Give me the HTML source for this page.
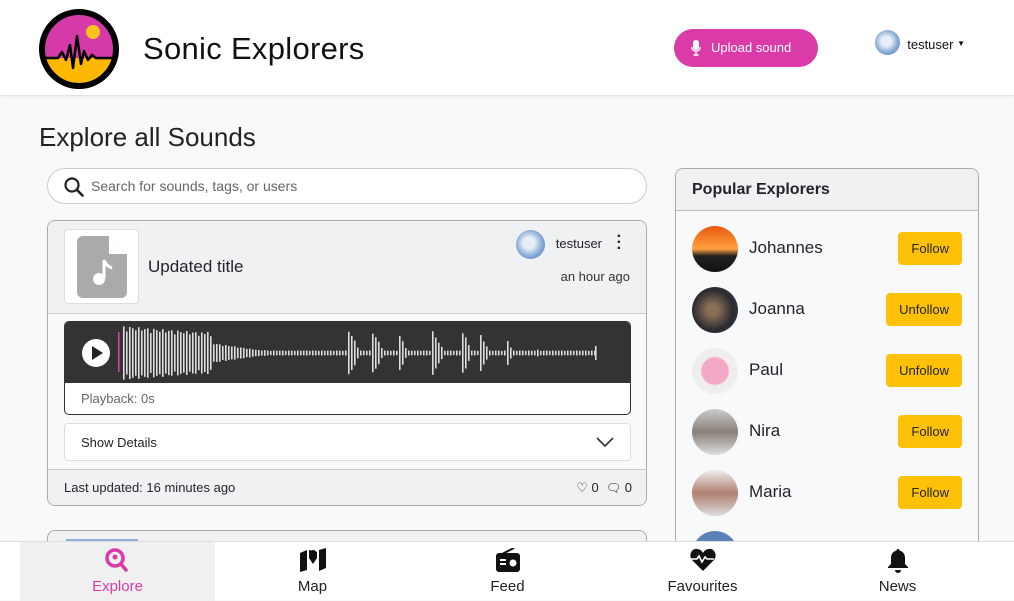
<!DOCTYPE html>
<html><head><meta charset="utf-8"><style>
*{box-sizing:border-box;margin:0;padding:0}
body{width:1014px;height:600px;overflow:hidden;background:#f8f9fa;font-family:"Liberation Sans","DejaVu Sans",sans-serif;color:#212529;position:relative}
.hdr{position:absolute;left:0;top:0;width:1014px;height:96px;background:#fff;border-bottom:1px solid #e3e3e3;box-shadow:0 1px 3px rgba(0,0,0,.06)}
.brand{position:absolute;left:143px;top:31px;font-size:31px;letter-spacing:.3px;color:#111}
.up{position:absolute;left:674px;top:29px;width:144px;height:38px;border-radius:19px;background:#db3ba9;color:#fff;font-size:13px;line-height:38px;padding-left:37px}
.user{position:absolute;left:875px;top:36px;font-size:13px;color:#111}
.av{display:inline-block;border-radius:50%;background:radial-gradient(circle at 45% 45%,#e8eef7 0 25%,#8fb0d8 55%,#3d6fb0 100%);vertical-align:middle}
h1{position:absolute;left:39px;top:122px;font-size:26px;font-weight:normal;color:#222}
.search{position:absolute;left:47px;top:168px;width:600px;height:36px;border:1px solid #ccc;border-radius:18px;background:#fff;font-size:14px;color:#666;line-height:34px;padding-left:43px}
.card{position:absolute;left:47px;top:220px;width:600px;height:286px;border:1px solid #aaa;border-radius:8px;background:#f8f9fa;overflow:hidden}
.ch{height:93px;background:#f0f1f3;border-bottom:1px solid #ccc;position:relative}
.thumb{position:absolute;left:16px;top:8px;width:75px;height:75px;border:1px solid #ddd;border-radius:4px;background:#fff}
.wave{position:absolute;left:16px;top:100px;width:567px;height:94px;border:1px solid #333;border-radius:5px;background:#fff;overflow:hidden}
.wt{height:61px;background:#333;position:relative}
.det{position:absolute;left:16px;top:202px;width:567px;height:38px;border:1px solid #ddd;border-radius:4px;background:#fff;font-size:13px;line-height:37px;padding-left:16px}
.cf{position:absolute;left:0;top:248px;width:600px;height:38px;background:#f0f1f3;border-top:1px solid #ccc;font-size:13px;line-height:36px;padding-left:16px}
.card2{position:absolute;left:47px;top:530px;width:600px;height:30px;border:1px solid #aaa;border-radius:8px;background:#f0f1f3}
.pop{position:absolute;left:675px;top:168px;width:304px;height:400px;border:1px solid #aaa;border-radius:8px;background:#f8f9fa;overflow:hidden}
.ph{height:42px;background:#f0f1f3;border-bottom:1px solid #bbb;font-weight:bold;font-size:16px;line-height:41px;padding-left:16px}
.row{position:absolute;left:16px;height:46px;width:270px}
.row .av2{position:absolute;left:0;top:0;width:46px;height:46px;border-radius:50%}
.row .n{position:absolute;left:57px;top:12px;font-size:17px}
.btn{position:absolute;right:0;top:6px;height:33px;background:#ffc107;border-radius:4px;font-size:13px;line-height:33px;padding:0 13px}
.nav{position:absolute;left:0;top:541px;width:1014px;height:59px;background:#fff;border-top:1px solid #ddd}
.ni{position:absolute;top:0;width:195px;height:59px;text-align:center;font-size:15px;color:#222}
.ni svg{position:absolute;left:85px;top:6px}
.ni span{position:absolute;left:0;right:0;top:36px}
</style></head><body>
<div class="hdr">
<svg style="position:absolute;left:38px;top:8px" width="82" height="82" viewBox="0 0 82 82">
<defs><clipPath id="c"><circle cx="41" cy="41" r="36"/></clipPath></defs>
<g clip-path="url(#c)"><rect width="82" height="50" fill="#d63aa8"/><rect y="50" width="82" height="40" fill="#ffb800"/></g>
<circle cx="41" cy="41" r="37" fill="none" stroke="#000" stroke-width="6"/>
<circle cx="55" cy="24" r="7" fill="#ffc21a"/>
<path d="M5 50 H20 L24 44 L28 52 L32 37 L35 60 L39 28 L43 56 L46 43 L50 52 L54 47 L58 50 H78" fill="none" stroke="#000" stroke-width="2.5" stroke-linejoin="round"/>
</svg>
<div class="brand">Sonic Explorers</div>
<div class="up"><svg style="position:absolute;left:17px;top:11px" width="10" height="16" viewBox="0 0 10 16"><rect x="2" y="0" width="6" height="10" rx="3" fill="#fff"/><path d="M0.8 7a4.2 4.2 0 0 0 8.4 0M5 11.5V15M2.5 15h5" stroke="#fff" stroke-width="1.4" fill="none"/></svg>Upload sound</div>
<div class="user"><span class="av" style="width:25px;height:25px;margin-top:-6px"></span> &nbsp;testuser <span style="font-size:8px;vertical-align:3px">▼</span></div>
</div>
<h1>Explore all Sounds</h1>
<div class="search"><svg style="position:absolute;left:16px;top:8px" width="20" height="20" viewBox="0 0 20 20"><circle cx="8" cy="8" r="6.5" fill="none" stroke="#222" stroke-width="2.2"/><path d="M13 13l5.5 5.5" stroke="#222" stroke-width="2.6" stroke-linecap="round"/></svg>Search for sounds, tags, or users</div>
<div class="card">
<div class="ch">
<div class="thumb"><svg style="position:absolute;left:12px;top:6px" width="50" height="62" viewBox="0 0 50 62"><path d="M6 0H32L50 18V56a6 6 0 0 1-6 6H6a6 6 0 0 1-6-6V6a6 6 0 0 1 6-6z" fill="#aaa"/><path d="M32 0V18H50" fill="#fff"/><path d="M27 24v18" stroke="#fff" stroke-width="3"/><path d="M27 24q2 6 8 8" stroke="#fff" stroke-width="3" fill="none"/><circle cx="22" cy="43" r="6" fill="#fff"/></svg></div>
<div style="position:absolute;left:100px;top:36px;font-size:17px">Updated title</div>
<div style="position:absolute;right:44px;top:9px;font-size:13px"><span class="av" style="width:29px;height:29px"></span>&nbsp;&nbsp; testuser</div>
<div style="position:absolute;right:24px;top:13px;font-size:16px;font-weight:bold;line-height:6px">·<br>·<br>·</div>
<div style="position:absolute;right:16px;top:48px;font-size:13px;color:#333">an hour ago</div>
</div>
<div class="wave"><div class="wt">
<svg width="567" height="61" style="position:absolute;left:0;top:0" id="wv">
<circle cx="31" cy="31" r="14" fill="#fff"/><path d="M27 24v14l11-7z" fill="#222"/>
<rect x="53" y="10" width="1.5" height="40" fill="#e040b0"/>
</svg></div>
<div style="font-size:13px;color:#666;padding:8px 0 0 16px">Playback: 0s</div></div>
<div class="det">Show Details<svg style="position:absolute;right:16px;top:13px" width="18" height="11" viewBox="0 0 18 11"><path d="M1 1l8 8 8-8" stroke="#333" stroke-width="1.6" fill="none"/></svg></div>
<div class="cf">Last updated: 16 minutes ago<span style="position:absolute;right:16px">♡ 0 &nbsp;<span style="font-size:12px">🗨</span> 0</span></div>
</div>
<div class="card2"><div style="position:absolute;left:18px;top:8px;width:72px;height:4px;background:#8fb0d8"></div></div>
<div class="pop"><div class="ph">Popular Explorers</div>
<div class="row" style="top:57px"><div class="av2" style="background:linear-gradient(#e85a10,#ffa040 50%,#222 65%,#111)"></div><div class="n">Johannes</div><div class="btn">Follow</div></div>
<div class="row" style="top:118px"><div class="av2" style="background:radial-gradient(circle at 45% 50%,#8a7058 0 15%,#2a2a30 60%,#3a4a60)"></div><div class="n">Joanna</div><div class="btn">Unfollow</div></div>
<div class="row" style="top:179px"><div class="av2" style="background:radial-gradient(circle,#f4a8c8 0 40%,#eee 45%)"></div><div class="n">Paul</div><div class="btn">Unfollow</div></div>
<div class="row" style="top:240px"><div class="av2" style="background:linear-gradient(#ccc,#8a8078 50%,#ddd)"></div><div class="n">Nira</div><div class="btn">Follow</div></div>
<div class="row" style="top:301px"><div class="av2" style="background:linear-gradient(#eee,#b08070 50%,#ddd)"></div><div class="n">Maria</div><div class="btn">Follow</div></div>
<div class="row" style="top:362px"><div class="av2" style="background:#5b82b8"></div></div>
</div>
<div class="nav">
<div class="ni" style="left:20px;background:#f0f0f0;color:#db3ba9"><svg width="24" height="26" viewBox="0 0 24 26"><circle cx="10" cy="10" r="8" fill="none" stroke="#db3ba9" stroke-width="3.5"/><circle cx="10" cy="9" r="2.5" fill="#db3ba9"/><path d="M16 16l5 6" stroke="#db3ba9" stroke-width="3.5" stroke-linecap="round"/></svg><span>Explore</span></div>
<div class="ni" style="left:215px"><svg width="26" height="24" viewBox="0 0 26 24"><path d="M0 5l7-3v20l-7 2zM19 2l7-2v20l-7 3zM9 2l8 2v6l-4 6-4-6z" fill="#111"/><circle cx="13" cy="6" r="4" fill="#111"/></svg><span>Map</span></div>
<div class="ni" style="left:410px"><svg width="26" height="24" viewBox="0 0 26 24"><path d="M19 0L7 6" stroke="#111" stroke-width="2"/><rect x="1" y="5" width="24" height="19" rx="3" fill="#111"/><rect x="5" y="11" width="6" height="2" fill="#fff"/><rect x="5" y="15" width="6" height="2" fill="#fff"/><circle cx="18" cy="15" r="3.5" fill="#fff"/></svg><span>Feed</span></div>
<div class="ni" style="left:605px"><svg width="26" height="24" viewBox="0 0 26 24"><path d="M13 23L2 12C-2 7 2 0 7 1c3 0 5 2 6 4 1-2 3-4 6-4 5-1 9 6 5 11z" fill="#111"/><path d="M1 11h6l2-3 3 6 3-5 2 2h7" stroke="#fff" stroke-width="1.6" fill="none"/></svg><span>Favourites</span></div>
<div class="ni" style="left:800px"><svg width="26" height="26" viewBox="0 0 26 26"><path d="M13 1c1 0 1.5.5 1.5 1.5C18 3.5 20 6 20 10v6l3 3v1H3v-1l3-3v-6c0-4 2-6.5 5.5-7.5C11.5 1.5 12 1 13 1z" fill="#111"/><path d="M10 22a3 3 0 0 0 6 0z" fill="#111"/></svg><span>News</span></div>
</div>
<script>
var s=document.getElementById('wv'),ns='http://www.w3.org/2000/svg';
function amp(x){var a=2;
if(x<140)a=27-(x-58)*0.08;
else if(x<200)a=Math.max(3,11-(x-140)*0.15);
else a=2.5;
var bursts=[[140,28,10],[283,24,10],[307,22,10],[333,20,8],[367,22,10],[395,26,10],[415,18,8],[440,18,6],[470,5,5],[535,5,5]];
for(var i=0;i<bursts.length;i++){var b=bursts[i];if(x>=b[0]&&x<b[0]+b[2]){a=Math.max(a,b[1]-(x-b[0])*b[1]/b[2]*0.8);}}
return a;}
for(var x=58;x<531;x+=3){var a=amp(x)*(0.8+0.2*Math.abs(Math.sin(x*1.7)));var r=document.createElementNS(ns,'rect');r.setAttribute('x',x);r.setAttribute('y',31-a);r.setAttribute('width',1.6);r.setAttribute('height',2*a);r.setAttribute('fill','#ddd');s.appendChild(r);}
var e=document.createElementNS(ns,'rect');e.setAttribute('x',530);e.setAttribute('y',24);e.setAttribute('width',1.6);e.setAttribute('height',14);e.setAttribute('fill','#ddd');s.appendChild(e);
</script>
</body></html>
